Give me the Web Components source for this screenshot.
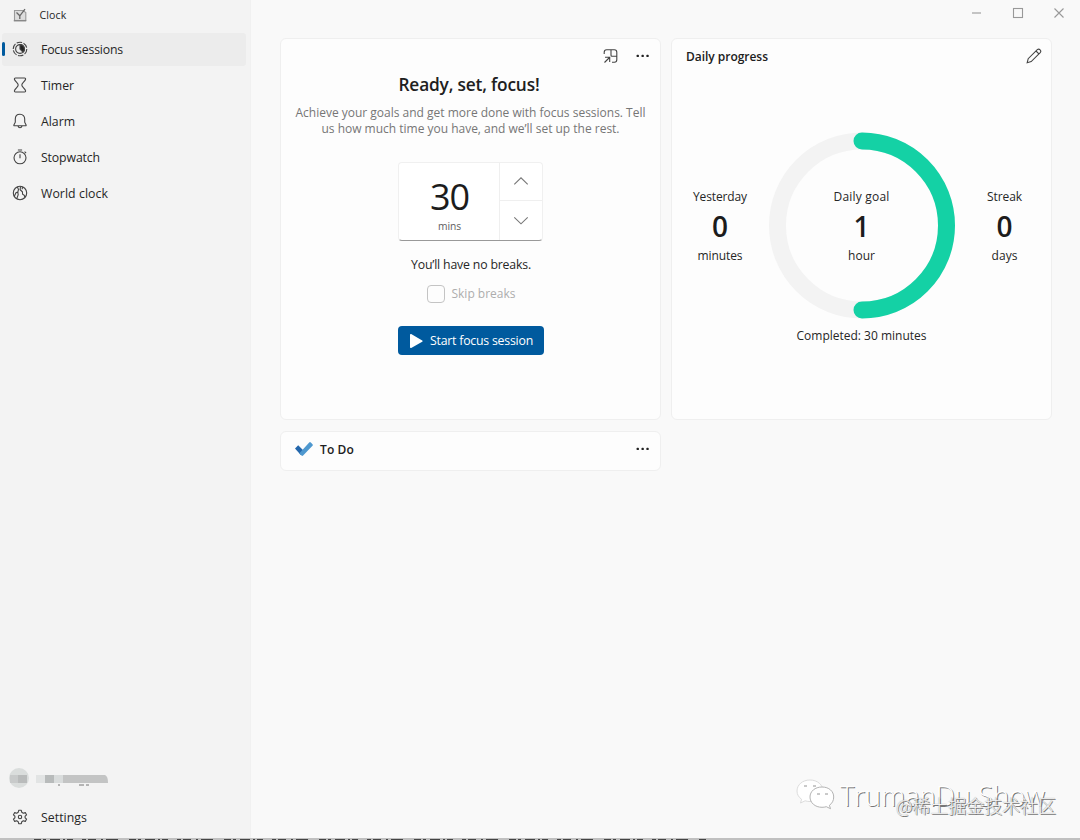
<!DOCTYPE html>
<html lang="en">
<head>
<meta charset="utf-8">
<title>Clock</title>
<style>
    html, body { margin: 0; height: 100%; }
    body {
        overflow: hidden;
        background: #f9f9f9;
        color: #262626;
        font: 12.3px/16px "Open Sans", "Noto Sans", sans-serif;
    }
</style>
</head>
<body>
<clock-app></clock-app>

<script>
const ICONS = {
    app: `<path d="M2.500 3.500h8.500l2.800 2v8h-11.300z" fill="#ddd" stroke="#999"/><path d="M4.500 5.500 7.800 8.800 13 2.200M7.800 8.800V12" stroke="#666" stroke-width="1.300"/><path d="M1.800 13.700h12.400" stroke="#888" stroke-width="1.500"/>`,
    focus: `<circle cx="8" cy="8" r="6.800" stroke-dasharray="5.600 1.500"/><circle cx="8" cy="8" r="4.400"/><path d="M8 3.600a4.400 4.400 0 0 1 3 7.600L8 8z" fill="#222"/>`,
    timer: `<path d="M3.500 1h9c1 0 1.300.7 1 1.500-.7 2.300-3.700 3.500-3.700 5.500s3 3.200 3.700 5.500c.3.800 0 1.500-1 1.500h-9c-1 0-1.300-.7-1-1.500C3.200 11.200 6.200 10 6.200 8s-3-3.200-3.700-5.500c-.3-.8 0-1.500 1-1.500z"/>`,
    alarm: `<path d="M8 1.200c-2.900 0-4.700 2-4.700 4.800v3.200L1.900 12c-.2.5 0 .8.500.8h11.200c.5 0 .7-.3.500-.8l-1.400-2.800V6c0-2.800-1.800-4.800-4.700-4.800zM6 13c.3 1.100 1 1.700 2 1.700s1.700-.6 2-1.700"/>`,
    stopwatch: `<circle cx="8" cy="8.800" r="6"/><path d="M8 5.200v4M5.900 1h4.200M12.600 2.700l1.500 1.400"/>`,
    world: `<circle cx="8" cy="8" r="6.700"/><path d="M2.200 11.500 4 7.800l1.800-.7.700-2.600L5.400 2M8.500 1.400l-.4 3.300 2.300 2.100.2 2.400 1.700 1.200.6 2.100M10.400 2l-.2 2.300M5.800 7.300l.4 2.300-1.400 4"/>`,
    settings: `<path d="M6.700 1.300h2.600l.5 2 1.500.9 2-.6 1.300 2.300-1.500 1.300v1.600l1.500 1.300-1.300 2.300-2-.6-1.500.9-.5 2H6.700l-.5-2-1.500-.9-2 .6-1.300-2.300 1.500-1.300V7.200L1.400 5.900l1.300-2.300 2 .6 1.500-.9z" stroke-linejoin="round"/><circle cx="8" cy="8" r="1.700"/>`,
    compact: `<path d="M1.200 6V4.200c0-1.500.9-2.400 2.400-2.400h7.800c1.500 0 2.400.9 2.400 2.400v7.600c0 1.500-.9 2.400-2.400 2.400H9M8 2v5.300c0 .7.300 1 1 1h4.600M1.500 14.500l5-5M2 9.300h4.700V14"/>`,
    more: `<g fill="#222" stroke="none"><rect x="1.600" y="6.800" width="2.300" height="2.300" rx=".7"/><rect x="6.500" y="6.800" width="2.300" height="2.300" rx=".7"/><rect x="11.400" y="6.800" width="2.300" height="2.300" rx=".7"/></g>`,
    pencil: `<path d="m1.200 14.700 1-4L11.300 1.700c1.900-1.700 4.600 1 2.900 2.900l-9 9zM10 3l2.900 2.900"/>`,
    up: `<path d="M1.300 10.300 8 3.800l6.700 6.500"/>`,
    down: `<path d="M1.300 5.300 8 11.800l6.700-6.500"/>`,
    play: `<path d="M2 1.800v12.400c0 .7.600 1 1.200.7l11-6.200c.6-.4.600-1 0-1.300l-11-6.300C2.600.8 2 1.100 2 1.800z" fill="currentColor" stroke="none"/>`,
    minimize: `<path d="M4 8h9"/>`,
    maximize: `<rect x="3.500" y="3.500" width="9" height="9"/>`,
    close: `<path d="m3.500 3.500 9 9M12.500 3.500l-9 9"/>`
};

class ClockIcon extends HTMLElement {
    connectedCallback() {
        const size = this.getAttribute('size') || '16';
        this.attachShadow({ mode: 'open' }).innerHTML = `
            <style>
                :host { display: block; flex: none; width: ${size}px; height: ${size}px; color: #444; }
                svg { display: block; }
            </style>
            <svg width="${size}" height="${size}" viewBox="0 0 16 16" fill="none" stroke="currentColor" stroke-width="1.1">${ICONS[this.getAttribute('name')]}</svg>
        `;
    }
}

/** One line of text, tracked so that it fills the given width. */
class FitText extends HTMLElement {
    connectedCallback() {
        this.attachShadow({ mode: 'open' }).innerHTML = `
            <style>
                :host { display: block; width: ${this.getAttribute('width')}px; white-space: nowrap; }
                span { display: inline-block; }
            </style>
            <span><slot></slot></span>
        `;
        const span = this.shadowRoot.querySelector('span');
        const gap = Number(this.getAttribute('width')) - span.getBoundingClientRect().width;
        span.style.letterSpacing = `${gap / this.textContent.length}px`;
    }
}

class NavItem extends HTMLElement {
    connectedCallback() {
        this.attachShadow({ mode: 'open' }).innerHTML = `
            <style>
                :host { display: block; height: 36px; }
                .row {
                    display: flex;
                    align-items: center;
                    gap: 13px;
                    height: 33px;
                    margin: 0 4px 0 2px;
                    border-radius: 3px;
                }
                .pill { width: 3px; height: 14px; margin: 0 -6px 2px 0; border-radius: 2px; }
                :host([selected]) .row { background: #ececec; }
                :host([selected]) .pill { background: #005a9e; }
                clock-icon { margin-bottom: 2px; }
                fit-text { padding-top: 1px; }
            </style>
            <div class="row">
                <span class="pill"></span>
                <clock-icon name="${this.getAttribute('icon')}"></clock-icon>
                <fit-text width="${this.getAttribute('width')}">${this.getAttribute('label')}</fit-text>
            </div>
        `;
    }
}

class BlurredAccount extends HTMLElement {
    connectedCallback() {
        this.attachShadow({ mode: 'open' }).innerHTML = `
            <style>
                :host { display: block; height: 24px; padding-left: 8px; }
                svg { display: block; }
            </style>
            <svg width="110" height="24">
                <circle cx="11" cy="11" r="10" fill="#dadddc"/>
                <path d="M2 8h8v8H2z" fill="#c8caca"/><path d="M10 8h9v8h-9z" fill="#b9bbbb"/>
                <path d="M28 8h9v8h-9z" fill="#e2e4e4"/><path d="M37 8h9v8h-9z" fill="#b8bbbb"/>
                <path d="M46 8h9v8h-9z" fill="#d9dcdc"/><path d="M55 8h42q3 1 3 8H55z" fill="#c3c4c4"/>
                <path d="M50 18h2M71 18h5M78 18h3" stroke="#777" stroke-width="1"/>
            </svg>
        `;
    }
}

class SideBar extends HTMLElement {
    connectedCallback() {
        this.attachShadow({ mode: 'open' }).innerHTML = `
            <style>
                :host {
                    display: flex;
                    flex-direction: column;
                    box-sizing: border-box;
                    height: 838px;
                    background: #f3f3f3;
                    border-right: 1px solid #f1f1f1;
                }
                .title {
                    display: flex;
                    align-items: center;
                    gap: 11.500px;
                    height: 30px;
                    padding: 0 0 3px 12px;
                    font-size: 10.6px;
                }
                .title clock-icon { margin-bottom: 1px; }
                nav { flex: 1; }
                .foot { height: 37px; margin-top: 10px; }
            </style>
            <div class="title"><clock-icon name="app"></clock-icon><fit-text width="27">Clock</fit-text></div>
            <nav>
                <nav-item icon="focus" label="Focus sessions" width="82" selected></nav-item>
                <nav-item icon="timer" label="Timer" width="33"></nav-item>
                <nav-item icon="alarm" label="Alarm" width="34"></nav-item>
                <nav-item icon="stopwatch" label="Stopwatch" width="59"></nav-item>
                <nav-item icon="world" label="World clock" width="67"></nav-item>
            </nav>
            <blurred-account></blurred-account>
            <nav-item class="foot" icon="settings" label="Settings" width="46"></nav-item>
        `;
    }
}

class TimePicker extends HTMLElement {
    connectedCallback() {
        this.attachShadow({ mode: 'open' }).innerHTML = `
            <style>
                :host {
                    display: grid;
                    grid-template-columns: 100px 43px;
                    box-sizing: border-box;
                    width: 145px;
                    height: 79px;
                    border: 1px solid #f0f0f0;
                    border-bottom-color: #999;
                    border-radius: 4px;
                    background: #fff;
                }
                .value { display: flex; flex-direction: column; align-items: center; padding: 13px 0 0 2px; }
                .number { font-size: 36px; line-height: 41px; color: #1c1c1c; }
                .unit { font-size: 10.3px; line-height: 14px; padding-top: 2px; color: #606060; }
                .steps { display: grid; grid-template-rows: 37px 39px; border-left: 1px solid #efefef; }
                .steps div { display: grid; place-items: center; }
                .steps div + div { border-top: 1px solid #efefef; }
                clock-icon { color: #777; }
            </style>
            <div class="value">
                <fit-text class="number" width="39">30</fit-text>
                <fit-text class="unit" width="23">mins</fit-text>
            </div>
            <div class="steps">
                <div><clock-icon name="up"></clock-icon></div>
                <div><clock-icon name="down"></clock-icon></div>
            </div>
        `;
    }
}

class AppCard extends HTMLElement {
    connectedCallback() {
        this.attachShadow({ mode: 'open' }).innerHTML = `
            <style>
                :host {
                    display: flex;
                    flex-direction: column;
                    box-sizing: border-box;
                    background: #fdfdfd;
                    border: 1px solid #efefef;
                    border-radius: 6px;
                }
                header {
                    display: flex;
                    align-items: center;
                    height: 34px;
                    padding: 0 9px 0 14px;
                    font-weight: 600;
                    font-size: 12px;
                    color: #202020;
                }
                .actions { display: flex; gap: 16px; margin-left: auto; }
            </style>
            <header>
                <slot name="title"></slot>
                <div class="actions"><slot name="actions"></slot></div>
            </header>
            <slot></slot>
        `;
    }
}

class FocusPanel extends HTMLElement {
    connectedCallback() {
        this.attachShadow({ mode: 'open' }).innerHTML = `
            <style>
                :host { display: flex; flex-direction: column; align-items: center; padding-right: 3px; }
                .heading { font-size: 17.3px; line-height: 24px; font-weight: 600; color: #202020; }
                .text {
                    display: flex;
                    flex-direction: column;
                    align-items: center;
                    padding-top: 8px;
                    margin-left: 3px;
                    line-height: 16px;
                    font-size: 12px;
                    color: #767676;
                }
                time-picker { margin: 25px 0 16px 2px; }
                .breaks { margin-left: 4px; }
                .skip { display: flex; align-items: center; gap: 7px; margin: 12px 0 0 4px; color: #adadad; font-size: 12px; }
                .box { box-sizing: border-box; width: 18px; height: 18px; border: 1px solid #c4c4c4; border-radius: 4px; }
                .start {
                    display: flex;
                    align-items: center;
                    gap: 6px;
                    box-sizing: border-box;
                    width: 146px;
                    height: 29px;
                    margin: 23px 0 0 4px;
                    padding-left: 10px;
                    border-radius: 4px;
                    background: #005a9e;
                    color: #fff;
                }
                .start clock-icon { color: #fff; }
                .start fit-text { padding-top: 1px; }
            </style>
            <fit-text class="heading" width="141">Ready, set, focus!</fit-text>
            <div class="text">
                <fit-text width="350">Achieve your goals and get more done with focus sessions. Tell</fit-text>
                <fit-text width="298">us how much time you have, and we’ll set up the rest.</fit-text>
            </div>
            <time-picker></time-picker>
            <fit-text class="breaks" width="120">You’ll have no breaks.</fit-text>
            <div class="skip"><span class="box"></span><fit-text width="64">Skip breaks</fit-text></div>
            <div class="start"><clock-icon name="play"></clock-icon><fit-text width="103">Start focus session</fit-text></div>
        `;
    }
}

class StatBlock extends HTMLElement {
    connectedCallback() {
        const [labelWidth, unitWidth] = this.getAttribute('widths').split(' ');
        this.attachShadow({ mode: 'open' }).innerHTML = `
            <style>
                :host { display: flex; flex-direction: column; align-items: center; padding-top: 1px; font-size: 12px; }
                b { font-size: 28px; line-height: 43px; font-weight: 600; color: #1c1c1c; }
            </style>
            <fit-text width="${labelWidth}">${this.getAttribute('label')}</fit-text>
            <b>${this.getAttribute('value')}</b>
            <fit-text width="${unitWidth}">${this.getAttribute('unit')}</fit-text>
        `;
    }
}

class ProgressPanel extends HTMLElement {
    connectedCallback() {
        this.attachShadow({ mode: 'open' }).innerHTML = `
            <style>
                :host { display: flex; flex-direction: column; align-items: center; padding-top: 59px; }
                .stats { display: grid; grid-template-columns: 96px 186px 96px; align-items: center; }
                .stats > stat-block:first-child { padding-right: 1px; }
                .stats > stat-block:last-child { padding-left: 4px; }
                .ring { display: grid; place-items: center; }
                .ring > * { grid-area: 1 / 1; }
                svg { display: block; }
                .done { padding-top: 9px; font-size: 12px; }
            </style>
            <div class="stats">
                <stat-block label="Yesterday" value="0" unit="minutes" widths="54 45"></stat-block>
                <div class="ring">
                    <svg width="186" height="187" fill="none" stroke-width="17">
                        <circle cx="93" cy="93.500" r="84.500" stroke="#f3f3f3"/>
                        <path d="M93 9a84.500 84.500 0 0 1 0 169" stroke="#14d1a5" stroke-linecap="round"/>
                    </svg>
                    <stat-block label="Daily goal" value="1" unit="hour" widths="56 27"></stat-block>
                </div>
                <stat-block label="Streak" value="0" unit="days" widths="35 26"></stat-block>
            </div>
            <fit-text class="done" width="130">Completed: 30 minutes</fit-text>
        `;
    }
}

class WaterMark extends HTMLElement {
    connectedCallback() {
        this.attachShadow({ mode: 'open' }).innerHTML = `
            <style>
                :host { position: absolute; left: 796px; top: 776px; width: 270px; height: 46px; }
                .name, .site { position: absolute; }
                .name {
                    left: 44px;
                    top: 2px;
                    font-size: 27px;
                    line-height: 36px;
                    font-weight: 300;
                    color: #fff;
                    text-shadow: 1px 1px 0 #777;
                }
                .site {
                    left: 100px;
                    top: 17px;
                    font: 300 18px/24px "Noto Sans CJK SC", sans-serif;
                    color: #f4f4f4;
                    text-shadow: 1px 1px 0 #777, 0 0 1px #888;
                }
            </style>
            <svg width="42" height="38" fill="#fff" stroke="#aaa" stroke-width=".9">
                <path d="M14 4C6.500 4 1 8.800 1 15c0 3.500 1.800 6.300 4.600 8.300L4.500 27l4.600-2.200c1.600.5 3.200.7 4.900.7 7.500 0 13-4.500 13-10.500S21.500 4 14 4z" stroke="#d8d8d8"/>
                <path d="M26 11c-7 0-12 4.300-12 10s5 10.300 12 10.300c1.500 0 3-.2 4.300-.6l4.200 2-1.100-3.400c2.700-1.900 4.300-4.700 4.300-8.300C37.700 15.300 33 11 26 11z"/>
                <path d="M8 10h3M17 10h3M21 18h3M29 18h3" stroke="#888"/>
            </svg>
            <fit-text class="name" width="205">TrumanDu Show</fit-text>
            <fit-text class="site" width="160">@稀土掘金技术社区</fit-text>
        `;
    }
}

/** Sliver of the window behind, below the app's lower edge. */
class WindowEdge extends HTMLElement {
    connectedCallback() {
        this.attachShadow({ mode: 'open' }).innerHTML = `
            <style>
                :host { display: block; grid-column: 1 / -1; }
                svg { display: block; }
            </style>
            <svg width="1080" height="2">
                <path d="M0 1h1080" stroke="#c0c0c0" stroke-width="2"/>
                <path d="M34 1.500h674" stroke="#444" stroke-dasharray="7 2 3 4 10 3 2 2 6 9 4 2 8 5 2 3 12 11"/>
            </svg>
        `;
    }
}

class ClockApp extends HTMLElement {
    connectedCallback() {
        this.attachShadow({ mode: 'open' }).innerHTML = `
            <style>
                :host {
                    display: grid;
                    grid-template: 838px 2px / 251px 1fr;
                    width: 1080px;
                    height: 840px;
                    overflow: hidden;
                }
                .caption { display: flex; justify-content: flex-end; gap: 25.500px; height: 38px; padding: 5px 13px 0 0; box-sizing: border-box; }
                .caption clock-icon { color: #999; }
                .cards { display: grid; grid-template: 382px 40px / 381px 381px; gap: 11px 10px; padding-left: 29px; }
                .progress-title { padding-top: 1px; }
                .todo { display: flex; align-items: center; gap: 7px; padding-top: 2px; }
                .todo svg { margin-bottom: 2px; }
            </style>
            <side-bar></side-bar>
            <main>
                <div class="caption">
                    <clock-icon name="minimize"></clock-icon>
                    <clock-icon name="maximize"></clock-icon>
                    <clock-icon name="close"></clock-icon>
                </div>
                <div class="cards">
                    <app-card>
                        <clock-icon slot="actions" name="compact"></clock-icon>
                        <clock-icon slot="actions" name="more"></clock-icon>
                        <focus-panel></focus-panel>
                    </app-card>
                    <app-card>
                        <fit-text slot="title" class="progress-title" width="82">Daily progress</fit-text>
                        <clock-icon slot="actions" name="pencil"></clock-icon>
                        <progress-panel></progress-panel>
                    </app-card>
                    <app-card>
                        <div slot="title" class="todo">
                            <svg width="18" height="16" viewBox="0 0 18 16">
                                <path d="m0 7.500 3.200-3.200 6 6-3.400 3.600z" fill="#2467ac"/>
                                <path d="m4.200 12.500 10-11q.8-.8 1.600 0l1.700 1.700q.7.8 0 1.600l-9.400 9.700q-.8.8-1.600 0z" fill="#4e98cf"/>
                            </svg>
                            <fit-text width="34">To Do</fit-text>
                        </div>
                        <clock-icon slot="actions" name="more"></clock-icon>
                    </app-card>
                </div>
            </main>
            <window-edge></window-edge>
            <water-mark></water-mark>
        `;
    }
}

customElements.define('clock-icon', ClockIcon);
customElements.define('fit-text', FitText);
customElements.define('nav-item', NavItem);
customElements.define('blurred-account', BlurredAccount);
customElements.define('side-bar', SideBar);
customElements.define('time-picker', TimePicker);
customElements.define('app-card', AppCard);
customElements.define('focus-panel', FocusPanel);
customElements.define('stat-block', StatBlock);
customElements.define('progress-panel', ProgressPanel);
customElements.define('water-mark', WaterMark);
customElements.define('window-edge', WindowEdge);
customElements.define('clock-app', ClockApp);
</script>
</body>
</html>
